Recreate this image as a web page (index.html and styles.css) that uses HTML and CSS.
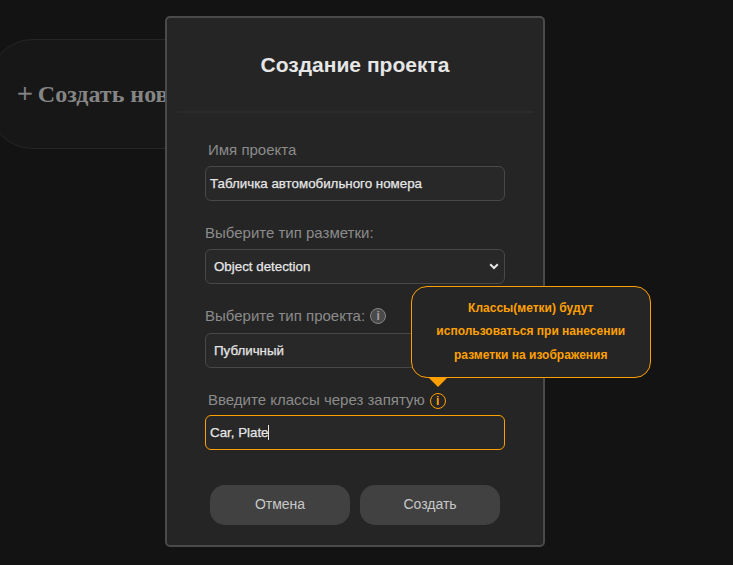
FILE: index.html
```html
<!DOCTYPE html>
<html lang="ru">
<head>
<meta charset="utf-8">
<title>Создание проекта</title>
<link rel="stylesheet" href="styles.css">
</head>
<body>
<div class="new-card"><span class="plus">+</span> Создать новый проект</div>
<main class="modal">
  <header class="modal-head"><h1>Создание проекта</h1></header>
  <form class="form">
    <div class="field">
      <div class="label indent"><span>Имя проекта</span></div>
      <div class="control"><span class="value">Табличка автомобильного номера</span></div>
    </div>
    <div class="field">
      <div class="label"><span>Выберите тип разметки:</span></div>
      <div class="control select"><span class="value">Object detection</span>
        <svg class="chevron" viewBox="0 0 10 7" width="10" height="7"><path d="M1.2 1.2 5 5 8.8 1.2"/></svg>
      </div>
    </div>
    <div class="field project-type">
      <div class="label"><span>Выберите тип проекта:</span><span class="info">i</span></div>
      <div class="control select"><span class="value">Публичный</span></div>
    </div>
    <div class="field last">
      <div class="label indent"><span>Введите классы через запятую</span><span class="info active">i<span class="tooltip">Классы(метки) будут использоваться при нанесении разметки на изображения</span></span></div>
      <div class="control focus"><span class="value">Car, Plate</span><span class="caret"></span></div>
    </div>
    <div class="actions"><button type="button">Отмена</button><button type="button">Создать</button></div>
  </form>
</main>
</body>
</html>
```
FILE: styles.css
```css
* { box-sizing: border-box; }
html, body { height: 100%; }
body {
  margin: 0;
  overflow: hidden;
  position: relative;
  background: #131313;
  font-family: "Liberation Sans", Arial, sans-serif;
  padding: 16px 0 0 165px;
}
.new-card {
  position: absolute;
  left: -12px;
  top: 39px;
  width: 330px;
  height: 110px;
  border: 1px solid #262626;
  border-radius: 45px;
  background: #171717;
  color: #858585;
  font: bold 24px/108px "Liberation Serif", "Times New Roman", serif;
  padding-left: 28px;
  white-space: nowrap;
}
.plus {
  margin-right: -1px;
  font-weight: 400;
  font-size: 28px;
  line-height: 1;
  vertical-align: -1px;
  -webkit-text-stroke: 0.4px #858585;
}
.modal {
  position: relative;
  width: 380px;
  height: 531px;
  border: 2px solid #4a4a4a;
  border-radius: 5px;
  background: #252525;
}
.modal-head {
  height: 95px;
  margin: 0 10px;
  border-bottom: 2px solid #2b2b2b;
}
h1 {
  margin: 0;
  color: #e6e6e6;
  font-size: 21px;
  line-height: 94px;
  text-align: center;
}
.form { padding: 26px 38px 0; }
.field { height: 83px; }
.field.last { height: 97px; }
.label {
  display: flex;
  align-items: center;
  height: 27px;
  padding-bottom: 6px;
  color: #8b8b8b;
  font-size: 15px;
  white-space: nowrap;
}
.project-type .label { height: 28px; padding-bottom: 7px; }
.last .label { padding-bottom: 2px; }
.last .label > span:first-child { margin-top: -2px; }
.indent { padding-left: 3px; }
.control {
  display: flex;
  align-items: center;
  height: 35px;
  padding: 0 4px;
  border: 1px solid #484848;
  border-radius: 6px;
  background: #282828;
  color: #e6e6e6;
  font-size: 13.333px;
  white-space: nowrap;
}
.value { -webkit-text-stroke: 0.25px #e6e6e6; }
.select { padding: 0 5px 0 8px; justify-content: space-between; }
.focus { border-color: #ffa000; }
.focus .value { margin-top: -1px; }
.chevron { fill: none; stroke: #e6e6e6; stroke-width: 2; }
.caret { width: 1px; height: 15px; margin-left: -1px; background: #e6e6e6; }
.info {
  position: relative;
  width: 16px;
  height: 16px;
  margin-left: 5px;
  border: 1px solid #858585;
  border-radius: 50%;
  background: #4a4a4a;
  color: #a0a0a0;
  font-size: 12px;
  font-weight: bold;
  line-height: 14px;
  text-align: center;
}
.active { border-color: #ffa000; background: transparent; color: #ffa000; }
.tooltip {
  position: absolute;
  left: -20px;
  bottom: 30px;
  width: 240px;
  height: 92px;
  padding: 10px 20px;
  border: 1px solid #ffa000;
  border-radius: 16px;
  background: #252525;
  font-size: 12px;
  line-height: 23.5px;
  white-space: normal;
}
.tooltip::after {
  content: "";
  position: absolute;
  left: 16px;
  top: 90px;
  border: 10px solid transparent;
  border-top-color: #ffa000;
  border-bottom: 0;
}
.actions { display: flex; gap: 10px; padding-left: 5px; }
button {
  width: 140px;
  height: 40px;
  padding: 0 0 2px;
  border: 0;
  border-radius: 15px;
  background: #414141;
  color: #c8c8c8;
  font: 14px "Liberation Sans", Arial, sans-serif;
}
```
